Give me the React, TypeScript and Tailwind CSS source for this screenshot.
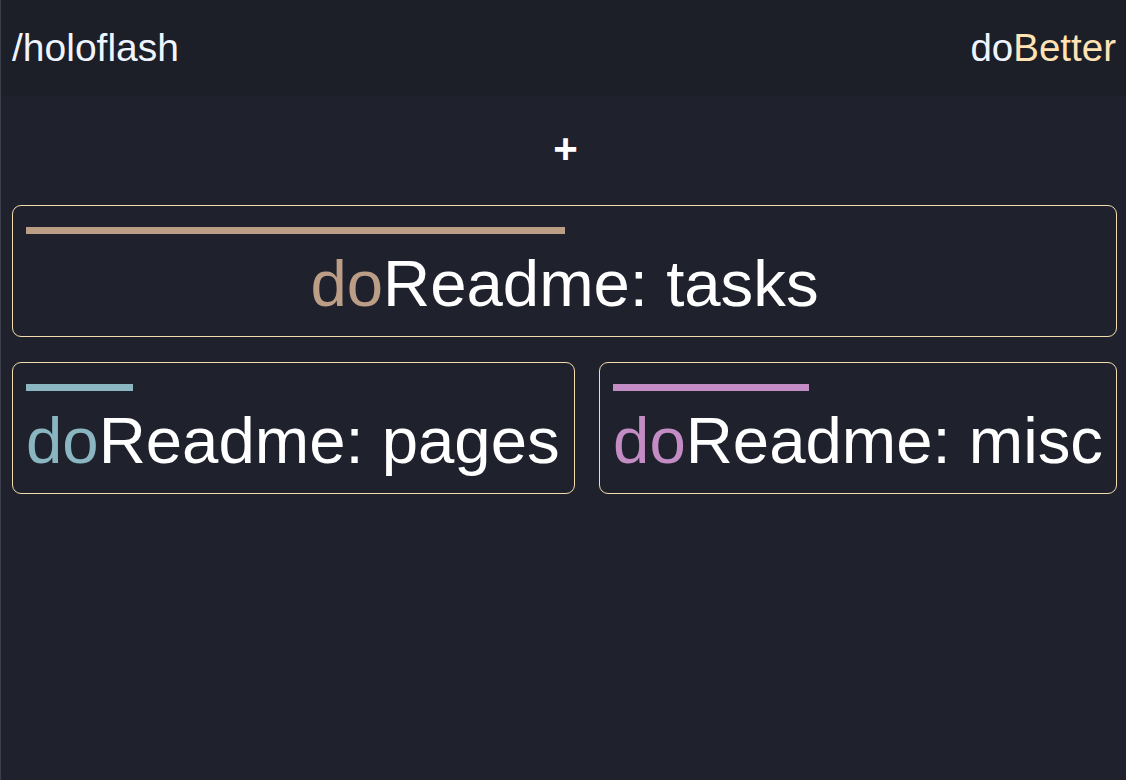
import React from "react";

const font = { fontFamily: '"Liberation Sans", Arial, Helvetica, sans-serif' };

function Card({
  name,
  color,
  pct,
  center,
  className,
}: {
  name: string;
  color: string;
  pct: number;
  center?: boolean;
  className?: string;
}) {
  return (
    <div
      className={`rounded-[9px] border border-[#f3dcae] pt-[21px] pb-[3px] px-[13px] ${className ?? ""}`}
    >
      <div className="h-[7px]" style={{ width: `${pct}%`, backgroundColor: color }} />
      <div
        className={`text-[65.3px] leading-[99px] whitespace-nowrap text-white ${center ? "text-center" : ""}`}
      >
        <span style={{ color }}>do</span>Readme: {name}
      </div>
    </div>
  );
}

export default function App() {
  return (
    <div
      className="min-h-[780px] w-full bg-[#1f222d] border-l border-[#3b3e4b] flex flex-col"
      style={font}
    >
      <header className="h-[96px] bg-[#1c1e28] flex items-center justify-between pl-[11px] pr-[10px]">
        <span className="text-[39px] text-[#eef5ff]">/holoflash</span>
        <span className="text-[38.5px] text-[#eef5ff]">
          do<span className="text-[#ffe3b5]">Better</span>
        </span>
      </header>
      <div className="pl-[11px] pr-[9px]">
        <div className="h-[109px] flex items-center justify-center">
          <span className="text-[42px] font-bold leading-none text-white pb-[3px] pl-[2px]">+</span>
        </div>
        <Card name="tasks" color="#bc9e86" pct={50} center />
        <div className="flex justify-between mt-[25px]">
          <Card name="pages" color="#8ab6c2" pct={20} className="pr-[14px]" />
          <Card name="misc" color="#c48cc4" pct={40} />
        </div>
      </div>
    </div>
  );
}
